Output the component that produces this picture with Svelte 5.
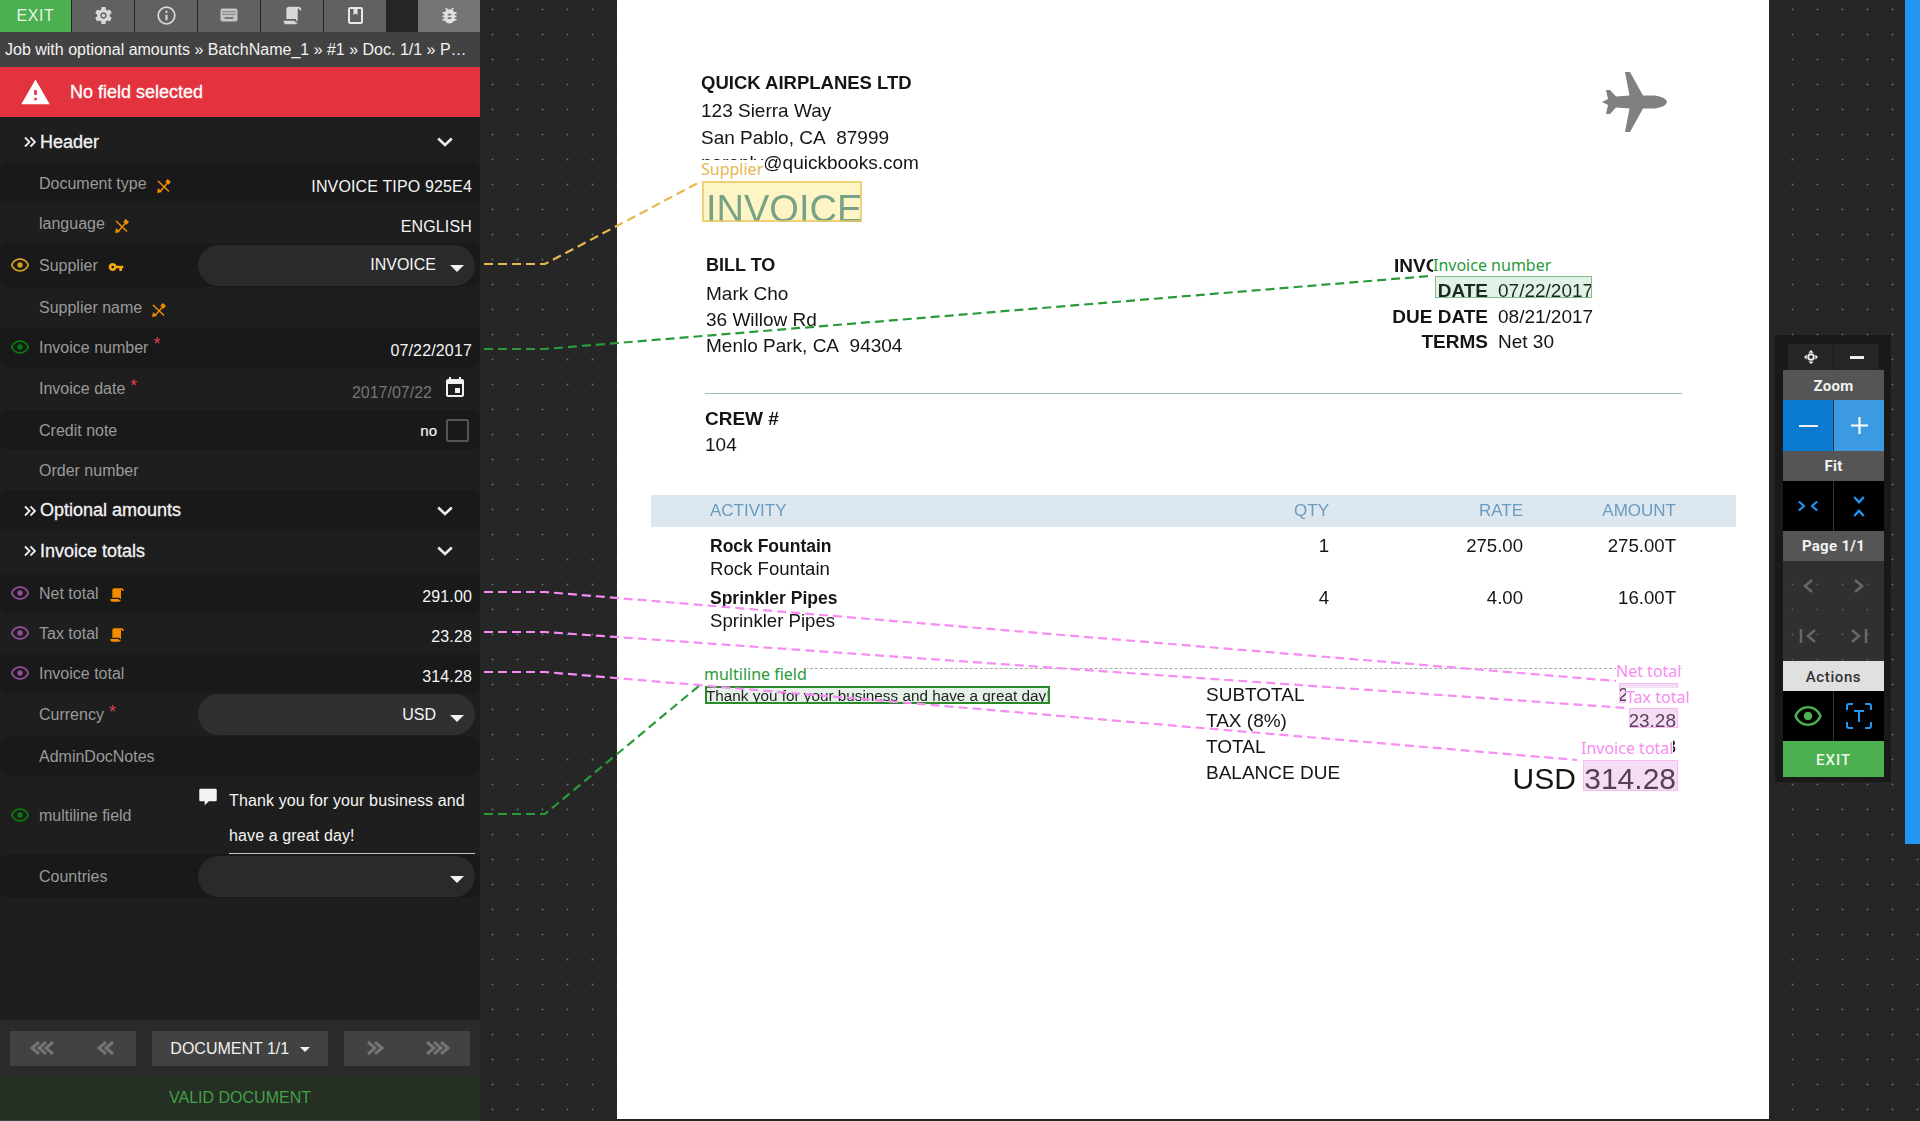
<script>
  const P = {
    gear: 'M19.14 12.94c.04-.3.06-.61.06-.94 0-.32-.02-.64-.07-.94l2.03-1.58c.18-.14.23-.41.12-.61l-1.92-3.32c-.12-.22-.37-.29-.59-.22l-2.39.96c-.5-.38-1.03-.7-1.62-.94l-.36-2.54c-.04-.24-.24-.41-.48-.41h-3.84c-.24 0-.43.17-.47.41l-.36 2.54c-.59.24-1.13.57-1.62.94l-2.39-.96c-.22-.08-.47 0-.59.22L2.74 8.87c-.12.21-.08.47.12.61l2.03 1.58c-.05.3-.09.63-.09.94s.02.64.07.94l-2.03 1.58c-.18.14-.23.41-.12.61l1.92 3.32c.12.22.37.29.59.22l2.39-.96c.5.38 1.03.7 1.62.94l.36 2.54c.05.24.24.41.48.41h3.84c.24 0 .44-.17.47-.41l.36-2.54c.59-.24 1.13-.56 1.62-.94l2.39.96c.22.08.47 0 .59-.22l1.92-3.32c.12-.22.07-.47-.12-.61l-2.01-1.58zM12 15.6c-1.98 0-3.6-1.62-3.6-3.6s1.62-3.6 3.6-3.6 3.6 1.62 3.6 3.6-1.62 3.6-3.6 3.6z',
    script: 'M17.8,20C17.4,21.2 16.3,22 15,22H5C3.3,22 2,20.7 2,19V18H5L14.2,18C14.6,19.2 15.7,20 17,20H17.8M19,2C20.7,2 22,3.3 22,5V6H20V5C20,4.4 19.6,4 19,4C18.4,4 18,4.4 18,5V18H17C16.4,18 16,17.6 16,17V16H5V5C5,3.3 6.3,2 8,2H19Z',
    bug: 'M20 8h-2.81c-.45-.78-1.07-1.45-1.82-1.96L17 4.41 15.59 3l-2.17 2.17C12.96 5.06 12.49 5 12 5c-.49 0-.96.06-1.41.17L8.41 3 7 4.41l1.62 1.63C7.88 6.55 7.26 7.22 6.81 8H4v2h2.09c-.05.33-.09.66-.09 1v1H4v2h2v1c0 .34.04.67.09 1H4v2h2.81c1.04 1.79 2.97 3 5.19 3s4.15-1.21 5.19-3H20v-2h-2.09c.05-.33.09-.66.09-1v-1h2v-2h-2v-1c0-.34-.04-.67-.09-1H20V8zm-6 8h-4v-2h4v2zm0-4h-4v-2h4v2z',
    key: 'M12.65 10C11.83 7.67 9.61 6 7 6c-3.31 0-6 2.69-6 6s2.69 6 6 6c2.61 0 4.83-1.67 5.65-4H17v4h4v-4h2v-4H12.65zM7 14c-1.1 0-2-.9-2-2s.9-2 2-2 2 .9 2 2-.9 2-2 2z',
    warn: 'M1 21h22L12 2 1 21zm12-3h-2v-2h2v2zm0-4h-2v-4h2v4z',
    event: 'M17 12h-5v5h5v-5zM16 1v2H8V1H6v2H5c-1.11 0-1.99.9-1.99 2L3 19c0 1.1.89 2 2 2h14c1.1 0 2-.9 2-2V5c0-1.1-.9-2-2-2h-1V1h-2zm3 18H5V8h14v11z',
    comment: 'M3 2h18a1.5 1.5 0 0 1 1.5 1.5v12a1.5 1.5 0 0 1-1.5 1.5h-8l-5 5v-5H3a1.5 1.5 0 0 1-1.5-1.5v-12A1.5 1.5 0 0 1 3 2z',
    eye: 'M12 6c3.79 0 7.17 2.13 8.82 6C19.17 15.87 15.79 18 12 18s-7.17-2.13-8.82-6C4.83 8.13 8.21 6 12 6m0-2C7 4 2.73 7.11 1 12c1.73 4.89 6 8 11 8s9.27-3.11 11-8c-1.73-4.89-6-8-11-8z',
    plane: 'M65 30C64 26 58 24 52 23.5L41 23.5 28 0 23 0 27.5 23.5 14 24.5 8 18 4 18 6 27 0 30 6 33 4 42 8 42 14 35.5 27.5 36.5 23 60 28 60 41 36.5 52 36.5C58 36 64 34 65 30Z'
  };

  const C = { gold: '#d4a020', green: '#0b7a0b', purple: '#96509b' };

  const rows = [
    { label: 'Document type', value: 'INVOICE TIPO 925E4', h: 40, dark: true, mark: 'tool' },
    { label: 'language', value: 'ENGLISH', h: 40, mark: 'tool' },
    { label: 'Supplier', select: 'INVOICE', h: 44, dark: true, eye: C.gold, mark: 'key' },
    { label: 'Supplier name', h: 40, mark: 'tool' },
    { label: 'Invoice number', value: '07/22/2017', h: 40, dark: true, eye: C.green, req: true },
    { label: 'Invoice date', date: '2017/07/22', h: 43, req: true },
    { label: 'Credit note', check: 'no', h: 40, dark: true },
    { label: 'Order number', h: 40 },
    { section: 'Optional amounts', h: 41, dark: true },
    { section: 'Invoice totals', h: 42, lift: true },
    { label: 'Net total', value: '291.00', h: 40, dark: true, eye: C.purple, mark: 'script' },
    { label: 'Tax total', value: '23.28', h: 40, eye: C.purple, mark: 'script' },
    { label: 'Invoice total', value: '314.28', h: 40, dark: true, eye: C.purple },
    { label: 'Currency', select: 'USD', h: 43, req: true, light: true },
    { label: 'AdminDocNotes', h: 40, dark: true },
    { label: 'multiline field', multi: true, h: 78, eye: C.green },
    { label: 'Countries', select: '', h: 44, dark: true }
  ];

  const tabs = ['gear', 'info', 'keyboard', 'script', 'book'];

  const links = [
    { c: '#e6b84d', y: 264, x2: 698, y2: 183 },
    { c: '#2a9a3a', y: 349, x2: 1430, y2: 276 },
    { c: '#f78cf4', y: 592, x2: 1616, y2: 681 },
    { c: '#f78cf4', y: 632, x2: 1626, y2: 708 },
    { c: '#f78cf4', y: 672, x2: 1577, y2: 760 },
    { c: '#2a9a3a', y: 814, x2: 700, y2: 685 }
  ];

  const boxes = [
    { kind: 'yellow', x: 85, y: 181, w: 160, h: 41 },
    { kind: 'green', x: 818, y: 276, w: 157, h: 22 },
    { kind: 'pink', x: 1002, y: 683, w: 59, h: 20 },
    { kind: 'pink', x: 1012, y: 708, w: 49, h: 20 },
    { kind: 'pink', x: 966, y: 760, w: 95, h: 31 },
    { kind: 'strong', x: 88, y: 686, w: 345, h: 18 }
  ];

  const tags = [
    { text: 'Supplier', c: '#e6b84d', x: 84, y: 160 },
    { text: 'Invoice number', c: '#2a9a3a', x: 816, y: 256 },
    { text: 'multiline field', c: '#2a9a3a', x: 87, y: 665 },
    { text: 'Net total', c: '#f98cf4', x: 999, y: 662 },
    { text: 'Tax total', c: '#f98cf4', x: 1009, y: 688 },
    { text: 'Invoice total', c: '#f98cf4', x: 964, y: 739 }
  ];
</script>

{#snippet eyeIcon(color)}
  <svg class="eye" viewBox="0 0 24 24" fill={color}><path d={P.eye} /><circle cx="12" cy="12" r="3.2" /></svg>
{/snippet}

{#snippet chevrons(n, dir)}
  <span class="chev-cell">
    <svg class="chev" style="width:{(n - 1) * 7 + 11}px" viewBox="0 0 {(n - 1) * 7 + 11} 14" fill="none" stroke="#757575" stroke-width="3">
      {#each Array(n) as _, i}
        {#if dir > 0}
          <polyline points="{i * 7 + 1},1 {i * 7 + 8},7 {i * 7 + 1},13" />
        {:else}
          <polyline points="{i * 7 + 10},1 {i * 7 + 3},7 {i * 7 + 10},13" />
        {/if}
      {/each}
    </svg>
  </span>
{/snippet}

{#snippet sectionHead(name)}
  <svg class="dbl" viewBox="0 0 12 12" fill="none" stroke="#eee" stroke-width="1.8"><polyline points="1,1.5 5.5,6 1,10.5" /><polyline points="6.5,1.5 11,6 6.5,10.5" /></svg>
  <span class="sec-name">{name}</span>
  <svg class="down" viewBox="0 0 16 10" fill="none" stroke="#eee" stroke-width="2.6"><polyline points="1.2,1.5 8,8 14.8,1.5" /></svg>
{/snippet}

<div class="app">
  <aside class="side">
    <nav class="tabs">
      <div class="tab exit">EXIT</div>
      {#each tabs as t}
        <div class="tab">
          {#if t === 'gear'}
            <svg class="ti" viewBox="0 0 24 24" fill="#d8d8d8"><path d={P.gear} /><circle cx="12" cy="12" r="2" /></svg>
          {:else if t === 'info'}
            <svg class="ti" viewBox="0 0 24 24" fill="none" stroke="#d8d8d8" stroke-width="2"><circle cx="12" cy="12" r="9.5" /><path d="M12 11v6.5M12 6.5v2.4" stroke-width="2.4" /></svg>
          {:else if t === 'keyboard'}
            <svg class="ti wide" viewBox="0 0 18 14"><rect x="0.5" y="0.5" width="17" height="13" rx="2" fill="#c4c4c4" /><path d="M2.5 3.6h13M2.5 6.4h13" stroke="#666" stroke-width="1.2" stroke-dasharray="1.2 0.8" /><path d="M4.5 10h9" stroke="#666" stroke-width="1.6" /></svg>
          {:else if t === 'script'}
            <svg class="ti" viewBox="0 0 24 24" fill="#d8d8d8"><path d={P.script} /></svg>
          {:else}
            <svg class="ti book" viewBox="0 0 15 17"><rect x="1" y="1" width="13" height="15" rx="1.2" fill="none" stroke="#e8e8e8" stroke-width="2" /><path d="M5.5 1h4v7L7.5 6.4 5.5 8z" fill="#e8e8e8" /></svg>
          {/if}
        </div>
      {/each}
      <div class="tab-gap"></div>
      <div class="tab last"><svg class="ti" viewBox="0 0 24 24" fill="#e0e0e0"><path d={P.bug} /></svg></div>
    </nav>
    <div class="crumb">Job with optional amounts » BatchName_1 » #1 » Doc. 1/1 » Page 1/1 » Header</div>
    <div class="alert">
      <svg viewBox="0 0 24 24" fill="#fff"><path d={P.warn} /></svg>
      <span>No field selected</span>
    </div>

    <div class="fields">
      <div class="section head">{@render sectionHead('Header')}</div>
      {#each rows as r}
        {#if r.section}
          <div class="section" class:dark={r.dark} class:lift={r.lift} style="height:{r.h}px">{@render sectionHead(r.section)}</div>
        {:else}
          <div class="row" class:dark={r.dark} style="height:{r.h}px">
            <div class="eye-slot">{#if r.eye}{@render eyeIcon(r.eye)}{/if}</div>
            <div class="label">
              <span>{r.label}</span>
              {#if r.req}<span class="req">*</span>{/if}
              {#if r.mark === 'tool'}
                <svg class="mark" viewBox="0 0 14 14" fill="none" stroke="#f08c00" stroke-width="1.5"><path d="M1 2l11 10.5M3 12.5L12 2.5" /><path d="M10.8 1l2.2 2-1.6 1.6-2-2z" fill="#f08c00" /><path d="M1.5 10.5l2 2-2.4.6z" fill="#f08c00" /></svg>
              {:else if r.mark === 'key'}
                <svg class="mark key" viewBox="0 0 24 24" fill="#f5a80f"><path d={P.key} /></svg>
              {:else if r.mark === 'script'}
                <svg class="mark scr" viewBox="0 0 24 24" fill="#f58c00"><path d={P.script} /></svg>
              {/if}
            </div>
            {#if r.value}<div class="value">{r.value}</div>{/if}
            {#if r.select !== undefined}
              <div class="select" class:light={r.light}>
                <span>{r.select}</span>
                <i class="caret"></i>
              </div>
            {/if}
            {#if r.date}
              <div class="date">
                <span>{r.date}</span>
                <svg viewBox="0 0 24 24" fill="#f0f0f0"><path d={P.event} /></svg>
              </div>
            {/if}
            {#if r.check}
              <div class="check"><span>{r.check}</span><i></i></div>
            {/if}
            {#if r.multi}
              <div class="multi">
                <svg viewBox="0 0 24 24" fill="#f2f2f2"><path d={P.comment} /></svg>
                <div class="multi-text">Thank you for your business and have a great day!</div>
              </div>
            {/if}
          </div>
        {/if}
      {/each}
    </div>

    <div class="pager">
      <div class="pg">{@render chevrons(3, -1)}{@render chevrons(2, -1)}</div>
      <div class="pg doc">DOCUMENT 1/1 <i class="caret small"></i></div>
      <div class="pg">{@render chevrons(2, 1)}{@render chevrons(3, 1)}</div>
    </div>
    <div class="valid">VALID DOCUMENT</div>
  </aside>

  <main class="canvas">
    <svg class="dots" width="1440" height="1121">
      <defs>
        <pattern id="dot" width="25" height="25" patternUnits="userSpaceOnUse">
          <path d="M11 9h3v1h-3zM12 8h1v3h-1z" fill="#46525c" opacity="0.75" />
          <path d="M12 9h1v1h-1z" fill="#5c6a76" />
        </pattern>
      </defs>
      <rect width="1440" height="1121" fill="url(#dot)" />
    </svg>

    <div class="scrollbar"></div>

    <section class="page">
      <div class="doc-flow">
        <div class="company">
          <div class="b co-name">QUICK AIRPLANES LTD</div>
          <div>123 Sierra Way</div>
          <div>San Pablo, CA&nbsp; 87999</div>
          <div class="co-mail">noreply@quickbooks.com</div>
        </div>
        <div class="title">INVOICE</div>

        <div class="parties">
          <div class="billto">
            <div class="b gap">BILL TO</div>
            <div>Mark Cho</div>
            <div>36 Willow Rd</div>
            <div>Menlo Park, CA&nbsp; 94304</div>
          </div>
          <div class="meta">
            <div class="b tight">INVOICE #</div><div class="tight">1001</div>
            <div class="b">DATE</div><div>07/22/2017</div>
            <div class="b">DUE DATE</div><div>08/21/2017</div>
            <div class="b">TERMS</div><div>Net 30</div>
          </div>
        </div>

        <hr class="rule" />
        <div class="crew">
          <div class="b">CREW #</div>
          <div>104</div>
        </div>

        <div class="thead tgrid">
          <div>ACTIVITY</div><div class="r">QTY</div><div class="r">RATE</div><div class="r">AMOUNT</div>
        </div>
        <div class="trow tgrid first">
          <div><div class="b2">Rock Fountain</div><div>Rock Fountain</div></div>
          <div class="r">1</div><div class="r">275.00</div><div class="r">275.00T</div>
        </div>
        <div class="trow tgrid">
          <div><div class="b2">Sprinkler Pipes</div><div>Sprinkler Pipes</div></div>
          <div class="r">4</div><div class="r">4.00</div><div class="r">16.00T</div>
        </div>

        <div class="dotted"></div>

        <div class="totals">
          <div class="thanks">Thank you for your business and have a great day!</div>
          <div class="sums">
            <div>SUBTOTAL</div><div class="r">291.00</div>
            <div>TAX (8%)</div><div class="r">23.28</div>
            <div>TOTAL</div><div class="r">314.28</div>
            <div>BALANCE DUE</div><div class="r big">USD 314.28</div>
          </div>
        </div>
      </div>

      <svg class="plane" viewBox="0 0 65 60" fill="#808080"><path d={P.plane} /></svg>

      {#each boxes as b}
        <div class="box {b.kind}" style="left:{b.x}px;top:{b.y}px;width:{b.w}px;height:{b.h}px"></div>
      {/each}
      {#each tags as t}
        <div class="tag" style="left:{t.x}px;top:{t.y}px;color:{t.c}">{t.text}</div>
      {/each}
    </section>

    <aside class="tools">
      <div class="t-top">
        <div><svg viewBox="0 0 16 16" fill="#eee"><path d="M8 0l3 3H5zM8 16l-3-3h6zM0 8l3-3v6zM16 8l-3 3V5z" /><circle cx="8" cy="8" r="3.2" fill="none" stroke="#eee" stroke-width="2.2" /></svg></div>
        <div><span class="bar"></span></div>
      </div>
      <div class="t-head first">Zoom</div>
      <div class="t-pair zoom">
        <div class="zoom-a"><span class="bar thin"></span></div>
        <div class="zoom-b"><svg viewBox="0 0 20 20" stroke="#fff" stroke-width="2.2"><path d="M1 10h18M10 1v18" /></svg></div>
      </div>
      <div class="t-head">Fit</div>
      <div class="t-pair black">
        <div><svg viewBox="0 0 22 12" fill="none" stroke="#2196f3" stroke-width="2.4"><path d="M1 1l5.5 5L1 11M21 1l-5.5 5 5.5 5" /></svg></div>
        <div><svg class="tall" viewBox="0 0 12 22" fill="none" stroke="#2196f3" stroke-width="2.4"><path d="M1 1l5 5.5L11 1M1 21l5-5.5L11 21" /></svg></div>
      </div>
      <div class="t-head">Page 1/1</div>
      <div class="t-nav">
        <div><svg viewBox="0 0 12 16" fill="none" stroke="#666" stroke-width="2.6"><path d="M10 2L3 8l7 6" /></svg></div>
        <div><svg viewBox="0 0 12 16" fill="none" stroke="#666" stroke-width="2.6"><path d="M2 2l7 6-7 6" /></svg></div>
        <div><svg class="ends" viewBox="0 0 18 16" fill="none" stroke="#666" stroke-width="2.6"><path d="M2 1v14M16 2L9 8l7 6" /></svg></div>
        <div><svg class="ends" viewBox="0 0 18 16" fill="none" stroke="#666" stroke-width="2.6"><path d="M2 2l7 6-7 6M16 1v14" /></svg></div>
      </div>
      <div class="t-head pale">Actions</div>
      <div class="t-pair black">
        <div><svg class="act eye-big" viewBox="0 0 24 24" fill="#4caf50"><path d={P.eye} /><circle cx="12" cy="12" r="3.4" /></svg></div>
        <div>
          <svg class="act" viewBox="0 0 26 26" fill="none" stroke="#2196f3" stroke-width="2"><path d="M1 7V3a2 2 0 0 1 2-2h4M19 1h4a2 2 0 0 1 2 2v4M25 19v4a2 2 0 0 1-2 2h-4M7 25H3a2 2 0 0 1-2-2v-4M8 8h10M13 8v11" /></svg>
        </div>
      </div>
      <div class="t-exit">EXIT</div>
    </aside>
  </main>

  <svg class="links" width="1920" height="1121" fill="none" stroke-width="2.2" stroke-dasharray="9 5">
    {#each links as l}
      <polyline points="484,{l.y} 545,{l.y} {l.x2},{l.y2}" stroke={l.c} />
    {/each}
  </svg>
</div>

<style>
  :global(body) { margin: 0; background: #262626; }
  .app {
    position: relative;
    display: flex;
    width: 1920px;
    height: 1121px;
    overflow: hidden;
    font-family: "Liberation Sans", Arial, sans-serif;
    font-size: 16px;
  }

  /* sidebar */
  .side { width: 480px; flex: none; display: flex; flex-direction: column; background: #1e1e1e; color: #eee; }
  .tabs { display: flex; height: 32px; flex: none; background: #262626; }
  .tab { width: 62px; margin-right: 1px; flex: none; background: #616161; display: flex; align-items: center; justify-content: center; }
  .tab.exit { width: 71px; background: #4caf50; color: #e8f5e9; letter-spacing: 0.6px; font-size: 16px; }
  .tab-gap { flex: 1; }
  .tab.last { width: 62px; margin-right: 0; background: #757575; }
  .ti { width: 21px; height: 21px; margin-top: -2px; }
  .ti.wide { width: 18px; height: 14px; }
  .ti.book { width: 15px; height: 17px; }
  .crumb {
    height: 35px; flex: none; background: #424242; color: #f2f2f2; line-height: 35px;
    padding: 0 13px 0 5px; white-space: nowrap; overflow: hidden; text-overflow: ellipsis; box-sizing: border-box;
  }
  .alert { height: 50px; flex: none; background: #e2333f; display: flex; align-items: center; color: #fff; font-size: 18px; -webkit-text-stroke: 0.3px #fff; }
  .alert svg { width: 31px; height: 31px; margin: 0 19px 0 20px; }

  .fields { flex: 1; }
  .section { display: flex; align-items: center; padding: 0 27px 0 24px; color: #f2f2f2; font-size: 18px; -webkit-text-stroke: 0.3px #f2f2f2; border-radius: 8px; box-sizing: border-box; }
  .section.head { height: 46px; padding-top: 4px; }
  .section.lift { padding-bottom: 2px; }
  .section.dark, .row.dark { background: #191919; }
  .dbl { width: 12px; height: 12px; margin-right: 4px; }
  .sec-name { flex: 1; }
  .down { width: 16px; height: 10px; }
  .row { display: flex; align-items: center; border-radius: 8px; position: relative; color: #f5f5f5; }
  .eye-slot { width: 39px; flex: none; display: flex; padding-left: 10px; box-sizing: border-box; }
  .eye { width: 20px; height: 20px; }
  .label { color: #9a9a9a; flex: 1; display: flex; align-items: center; white-space: nowrap; padding-top: 1px; }
  .req { color: #d9404e; font-size: 18px; margin-left: 5px; position: relative; top: -3px; }
  .mark { width: 14px; height: 14px; margin-left: 10px; position: relative; top: 2px; }
  .mark.key { width: 16px; height: 16px; margin-left: 10px; top: 1px; }
  .mark.scr { width: 16px; height: 16px; margin-left: 10px; top: 1px; }
  .value { padding: 7px 8px 0 0; letter-spacing: 0.15px; }
  .select { width: 277px; height: 41px; margin-right: 5px; border-radius: 21px; background: #2a2a2a; display: flex; align-items: center; justify-content: flex-end; padding-right: 11px; box-sizing: border-box; }
  .select.light { background: #303030; }
  .select span { margin-right: 14px; }
  .caret { width: 0; height: 0; border-left: 7px solid transparent; border-right: 7px solid transparent; border-top: 7px solid #f2f2f2; margin-top: 7px; }
  .caret.small { border-left-width: 5px; border-right-width: 5px; border-top-width: 5px; margin: 0 0 0 6px; display: inline-block; vertical-align: 2px; }
  .date { display: flex; align-items: center; color: #757575; margin-right: 13px; }
  .date span { margin: 8px 11px 0 0; }
  .date svg { width: 24px; height: 24px; margin-top: -1px; }
  .check { display: flex; align-items: center; margin-right: 11px; font-size: 15px; -webkit-text-stroke: 0.2px #eee; }
  .check i { width: 23px; height: 23px; box-sizing: border-box; border: 2px solid #555; border-radius: 2px; margin-left: 9px; }
  .multi { width: 282px; margin-right: 5px; margin-left: -5px; display: flex; height: 100%; align-items: flex-start; position: relative; flex: none; }
  .multi svg { width: 20px; height: 20px; margin-top: 11px; flex: none; margin-left: 5px; }
  .multi-text { margin-left: 11px; flex: 1; line-height: 35px; padding-top: 7px; height: 70px; border-bottom: 1px solid #c4c4c4; color: #f5f5f5; letter-spacing: 0.12px; }

  .pager { height: 56px; flex: none; background: #2a2a2a; display: flex; align-items: center; justify-content: space-between; padding: 0 10px; box-sizing: border-box; }
  .pg { height: 35px; width: 126px; background: #424242; display: grid; grid-template-columns: 1fr 1fr; }
  .chev-cell { display: flex; align-items: center; justify-content: center; }
  .pg.doc { width: 176px; display: block; line-height: 35px; text-align: center; color: #f0f0f0; font-size: 16px; }
  .chev { height: 14px; }
  .valid { height: 44px; flex: none; border-bottom: 1px solid #2f4f4f; background: #252f23; color: #43a047; text-align: center; line-height: 44px; box-sizing: content-box; }

  /* canvas */
  .canvas { position: relative; flex: 1; background: #262626; }
  .dots { position: absolute; left: 0; top: 0; }
  .scrollbar { position: absolute; right: 0; top: 0; width: 15px; height: 844px; background: #2196f3; }
  .page { position: relative; margin-left: 137px; width: 1152px; height: 1119px; background: #fff; color: #151515; font-size: 19px; overflow: hidden; }
  .doc-flow { padding-top: 69px; filter: blur(0.3px); }
  .b { font-weight: 700; }
  .company { margin-left: 84px; line-height: 27px; }
  .co-name { font-size: 18.5px; line-height: 28px; }
  .co-mail { margin-top: -2px; }
  .title { margin: 12.5px 0 -5.5px 89px; font-size: 38px; line-height: 41px; color: #34809f; }
  .parties { display: flex; justify-content: space-between; margin-top: 28px; line-height: 26px; }
  .billto { margin-left: 89px; }
  .billto .b { font-size: 18px; }
  .gap { margin-bottom: 3px; }
  .meta { display: grid; grid-template-columns: 200px 200px; column-gap: 10px; margin: 1px 71px 0 0; align-self: flex-start; line-height: 25.6px; }
  .meta .b { text-align: right; }
  .meta .tight { margin-bottom: -0.5px; }
  .rule { border: 0; height: 1px; background: #a3bdb8; margin: 34px 87px 0 88px; }
  .crew { margin: 11.5px 0 0 88px; line-height: 26px; }
  .tgrid { display: grid; grid-template-columns: 519px 100px 194px 153px; margin-left: 34px; padding-left: 59px; width: 966px; padding-right: 60px; }
  .thead { margin-top: 37.5px; height: 32px; line-height: 31px; background: #dde7ef; color: #6a9cc0; font-size: 17px; box-sizing: content-box; }
  .trow { line-height: 22.5px; margin-bottom: 7px; font-size: 18.6px; }
  .trow.first { margin-top: 8px; }
  .b2 { font-weight: 700; font-size: 17.5px; }
  .r { text-align: right; }
  .dotted { margin: 36px 87px 0 88px; border-top: 1px dashed #aaa; }
  .totals { display: flex; margin-top: 13px; line-height: 26px; }
  .thanks { margin-left: 89px; width: 500px; font-size: 15.3px; flex: none; position: relative; top: 1px; }
  .sums { display: grid; grid-template-columns: 200px 270px; }
  .big { font-size: 30px; line-height: 26px; padding-top: 6px; }

  .plane { position: absolute; left: 985px; top: 72px; width: 65px; height: 60px; }
  .box { position: absolute; box-sizing: border-box; }
  .box.yellow { background: rgba(250, 225, 90, 0.35); border: 2px solid rgba(235, 200, 100, 0.8); }
  .box.green { background: rgba(60, 160, 80, 0.15); border: 1px solid #7fc08a; }
  .box.strong { background: rgba(60, 140, 80, 0.12); border: 2px solid #2a8a2a; }
  .box.pink { background: rgba(225, 150, 225, 0.32); border: 1px solid #f3bdf0; }
  .tag { position: absolute; font-family: "Noto Sans", sans-serif; font-size: 16px; line-height: 18px; background: #fff; white-space: nowrap; }

  /* tool panel */
  .tools { position: absolute; left: 1295px; top: 335px; width: 116px; height: 447px; box-sizing: border-box; padding: 9px 7px 5px 8px; background: rgba(0, 0, 0, 0.32); font-family: Roboto, sans-serif; }
  .t-top { display: flex; height: 26px; margin: 0 5px; background: #262626; }
  .t-top > div { flex: 1; display: flex; align-items: center; justify-content: center; }
  .t-top > div + div { border-left: 1px solid #1a1a1a; }
  .t-top svg { width: 14px; height: 14px; }
  .bar { display: block; width: 14px; height: 3px; background: #eee; }
  .bar.thin { width: 19px; height: 2px; }
  .t-head { height: 30px; line-height: 30px; background: #555; color: #f2f2f2; text-align: center; font-weight: 700; font-size: 15px; letter-spacing: 0.3px; }
  .t-head.first { line-height: 32px; }
  .t-head.pale { background: #e0e0e0; color: #333; font-weight: 500; letter-spacing: 0.6px; line-height: 32px; }
  .t-pair { display: flex; height: 50px; }
  .t-pair.zoom { height: 51px; }
  .t-pair > div { flex: 1; display: flex; align-items: center; justify-content: center; }
  .t-pair > div + div { border-left: 1px solid #333; }
  .zoom-a { background: #0a79d0; }
  .zoom-b { background: #3b9ae1; }
  .zoom-b svg { width: 19px; height: 19px; }
  .black { background: #000; }
  .black svg { width: 20px; height: 12px; }
  .black svg.tall { width: 12px; height: 21px; }
  .black svg.act { width: 26px; height: 26px; }
  .black svg.eye-big { width: 30px; height: 30px; }
  .t-nav { display: grid; grid-template-columns: 1fr 1fr; height: 100px; background: rgba(255, 255, 255, 0.1); }
  .t-nav > div { display: flex; align-items: center; justify-content: center; }
  .t-nav svg { width: 12px; height: 16px; }
  .t-nav svg.ends { width: 18px; height: 16px; }
  .t-exit { height: 36px; line-height: 38px; background: #4caf50; color: #eaf6ea; text-align: center; font-size: 15px; letter-spacing: 1px; font-weight: 500; }

  .links { position: absolute; left: 0; top: 0; pointer-events: none; }
</style>
